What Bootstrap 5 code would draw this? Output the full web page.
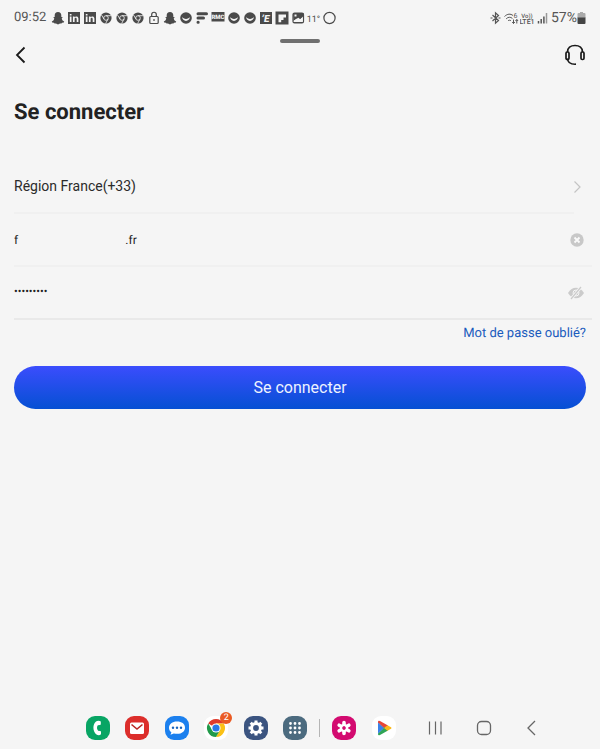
<!DOCTYPE html>
<html lang="fr">
<head>
<meta charset="utf-8">
<meta name="viewport" content="width=device-width, initial-scale=1">
<title>Se connecter</title>
<link href="https://cdn.jsdelivr.net/npm/bootstrap@5.3.0/dist/css/bootstrap.min.css" rel="stylesheet">
<style>
body { background: #f5f5f5; color: #222; font-family: Roboto, "Liberation Sans", sans-serif; text-rendering: geometricPrecision; }
svg { display: block; flex: none; }
svg text { font-family: Roboto, sans-serif; }
.status { height: 36px; padding: 0 14px; font-size: 14px; color: #555; }
.status-icons { color: #4a4a4a; }
.clock { width: 36px; white-space: nowrap; font-size: 13px; color: #555; }
.grip { width: 40px; height: 4px; background: #707070; margin-top: 3px; }
.topbar { height: 24px; padding: 0 14px; }
.plain { background: none; border: 0; padding: 0; color: #1a1a1a; }
.title { font-size: 22px; line-height: 28px; font-weight: 700; margin: 32px 14px 34px; }
.fields { padding: 0 8px 0 14px; }
.line { height: 53px; border-bottom: 2px solid #f0f0f0; padding-right: 8px; }
.line-short { margin-right: 18px; padding-right: 0; }
.line-last { border-color: #e9e9e9; }
.region { font-size: 14px; color: #2b2b2b; }
.region svg { margin-right: -10px; }
.entry, .entry:focus { background: none; border: 0; padding: 0; font-size: 12px; color: #222; box-shadow: none; border-radius: 0; text-rendering: inherit; }
.entry[type=password] { font-size: 11px; }
.forgot { font-size: 13px; line-height: 20px; color: #1a5bbd; margin: 4px 14px 22px; }
.submit { height: 43px; margin: 0 14px; font-size: 16px; color: #eef3ff; border: 0; background: linear-gradient(#3b4dfd, #0550d3); }
.submit:hover { color: #fff; background: linear-gradient(#3b4dfd, #0550d3); }
.dock { padding: 0 59px 9px 86px; }
.apps { width: 221px; }
.recent { width: 64px; }
.navkeys { width: 115px; margin-left: 30px; }
.rule { width: 1px; height: 18px; background: #b5b5b5; margin: 0 12px; }
.count { top: -4px; right: -4px; width: 12px; height: 12px; font-size: 9px; line-height: 12px; background: #ea5a23; color: #fff; }
</style>
<script src="https://cdn.jsdelivr.net/npm/bootstrap@5.3.0/dist/js/bootstrap.bundle.min.js"></script>
</head>
<body>
<svg width="0" height="0" class="position-absolute" aria-hidden="true">
  <defs>
    <symbol id="snap" viewBox="0 0 16 16"><path fill="currentColor" d="M8 2C5.800 2 4.700 3.500 4.700 5.300V7L3.200 7.200 4.300 8.500C4 10 3 11 1.800 11.500L2.200 12.400 4 12.800 4.500 13.600 6 13.400 8 14.400 10 13.400 11.500 13.600 12 12.800 13.800 12.400 14.200 11.500C13 11 12 10 11.700 8.500L12.800 7.200 11.300 7V5.300C11.300 3.500 10.200 2 8 2Z"/></symbol>
    <symbol id="linkedin" viewBox="0 0 16 16"><path fill="currentColor" d="M2 2h12v12H2z"/><path fill="#f5f5f5" d="M3.800 6.500h1.700V12H3.800zM3.800 4h1.700v1.600H3.800zM6.900 6.500h1.600v.8c.8-1.300 3.900-1.300 3.900 1.300V12h-1.700V9c0-1.600-2.100-1.500-2.100 0v3H6.900z"/></symbol>
    <symbol id="chrome-mono" viewBox="0 0 16 16"><circle cx="8" cy="8" r="5.600" fill="currentColor"/><circle cx="8" cy="8" r="2.300" fill="none" stroke="#f5f5f5" stroke-width=".8"/><path stroke="#f5f5f5" stroke-width=".8" fill="none" d="M8 5.700h5M6 9.100 3.400 4.800M10 9.100 7.600 13.500"/></symbol>
    <symbol id="smile" viewBox="0 0 16 16"><circle cx="8" cy="8" r="5.800" fill="currentColor"/><path d="M4 6.800C4.400 12.300 11.600 12.300 12 6.800 10.500 9.600 5.500 9.600 4 6.800Z" fill="#f5f5f5"/></symbol>
  </defs>
</svg>
<div class="d-flex flex-column min-vh-100">
  <header>
    <div class="status d-flex align-items-center justify-content-between">
      <div class="status-icons d-flex align-items-center">
        <span class="clock">09:52</span>
        <svg width="16" height="16"><use href="#snap"/></svg>
        <svg width="16" height="16"><use href="#linkedin"/></svg>
        <svg width="16" height="16"><use href="#linkedin"/></svg>
        <svg width="16" height="16"><use href="#chrome-mono"/></svg>
        <svg width="16" height="16"><use href="#chrome-mono"/></svg>
        <svg width="16" height="16"><use href="#chrome-mono"/></svg>
        <svg width="16" height="16" viewBox="0 0 16 16" fill="none" stroke="currentColor" stroke-width="1.200"><rect x="3.800" y="6.500" width="8.400" height="7" rx="1"/><path d="M5.700 6.500V4.500c0-3 4.600-3 4.600 0v2M8 9v2"/></svg>
        <svg width="16" height="16"><use href="#snap"/></svg>
        <svg width="16" height="16"><use href="#smile"/></svg>
        <svg width="16" height="16" viewBox="0 0 16 16" stroke="currentColor" stroke-width="3" stroke-linecap="round"><path d="M4 3.700h8.500M4 8h5.500M4 12.200h.2"/></svg>
        <svg width="16" height="16" viewBox="0 0 16 16"><path fill="currentColor" d="M1.500 2h13v9.500h-13z"/><text x="8" y="9" font-size="6" font-weight="900" text-anchor="middle" fill="#f5f5f5">RMC</text></svg>
        <svg width="16" height="16"><use href="#smile"/></svg>
        <svg width="16" height="16"><use href="#smile"/></svg>
        <svg width="16" height="16" viewBox="0 0 16 16"><path fill="currentColor" d="M2 2h12v12H2z"/><text x="7.500" y="11.500" font-size="10" font-weight="900" font-style="italic" text-anchor="middle" fill="#f5f5f5">’E</text></svg>
        <svg width="16" height="16" viewBox="0 0 16 16"><path fill="currentColor" d="M1.500 1.500h13v13h-13z"/><path fill="#f5f5f5" d="M4.500 4.500h7.500v3H9.500V10h-2.300v2.300H4.500z"/></svg>
        <svg width="16" height="16" viewBox="0 0 16 16"><rect x="3" y="3" width="10.500" height="10" rx="1.500" fill="none" stroke="currentColor" stroke-width="1.200"/><path fill="currentColor" d="M3 3h10.500v3l-3.200 3.200-2-1.500L3.500 11zM3 12h10v1H3z"/><path fill="#f5f5f5" d="M4.500 4.500h2v2h-2zM4 10.500 7 8.500l2 1.700 3.500-2.800v4.100H4z"/></svg>
        <svg width="16" height="16" viewBox="0 0 16 16"><text x="7.500" y="11.500" font-size="9" text-anchor="middle" fill="currentColor">11°</text></svg>
        <svg width="16" height="16" viewBox="0 0 16 16"><circle cx="7.500" cy="8" r="5.600" fill="none" stroke="currentColor" stroke-width="1.200"/></svg>
      </div>
      <div class="d-flex align-items-center">
        <svg width="14" height="16" viewBox="0 0 14 16" fill="none" stroke="currentColor" stroke-width="1.200"><path d="M4.500 5l6 5.500-3 2.700V2.800l3 2.700L4.500 11M2.500 8h2M10.500 8h2"/></svg>
        <svg width="18" height="16" viewBox="0 0 18 16" fill="none" stroke="currentColor" stroke-width="1"><path d="M2.500 6.500C5.500 3.600 8.500 3.600 11 5.500M4.200 8.800c2-2 4.200-2 6.200-.4M6 10.800c1-.8 2-.8 3 0M11.500 9.500v4M10.200 12l1.300 1.500 1.300-1.500M14.800 13.500v-4M13.500 11l1.300-1.500 1.300 1.500"/><text x="11.500" y="8" font-size="7" fill="currentColor" stroke="none">6</text></svg>
        <svg width="15" height="16" viewBox="0 0 15 16" fill="currentColor"><text x="7" y="7.500" font-size="6" font-weight="500" text-anchor="middle">Vo))</text><text x="7" y="14" font-size="7" font-weight="500" text-anchor="middle">LTE1</text></svg>
        <svg width="16" height="16" viewBox="0 0 16 16" stroke-width="1.500" stroke="currentColor"><path d="M3.500 11v2.500M6.200 9v4.500M8.900 6.500v7"/><path stroke="#999" d="M11.500 3v10.500"/></svg>
        <span>57%</span>
        <svg width="9" height="14" viewBox="0 0 9 14"><path fill="#aaa" d="M3 1h3v1h1.500q1 0 1 1v4h-8V3q0-1 1-1H3z"/><path fill="#444" d="M.5 6.500h8V12q0 1-1 1h-6q-1 0-1-1z"/></svg>
      </div>
    </div>
    <div class="grip rounded-pill mx-auto"></div>
    <div class="topbar d-flex align-items-center justify-content-between">
      <button type="button" class="plain" aria-label="Retour"><svg width="14" height="18" viewBox="0 0 14 18" fill="none" stroke="currentColor" stroke-width="1.800"><path d="M10.500 1.500 3 9l7.500 7.500"/></svg></button>
      <button type="button" class="plain" aria-label="Assistance"><svg width="22" height="22" viewBox="0 0 22 22" fill="none" stroke="currentColor" stroke-width="1.700"><path d="M3.500 8C3.500 4 6.500 1.500 11 1.500S18.500 4 18.500 8M3.500 14.500c.3 4.300 3 6 8.500 5.700"/><rect x="2" y="8" width="3" height="7.500" rx="1.200"/><rect x="17" y="8" width="3" height="7.500" rx="1.200"/></svg></button>
    </div>
  </header>
  <main>
    <form>
      <h1 class="title">Se connecter</h1>
      <div class="fields">
        <div class="line line-short d-flex">
          <button type="button" class="plain region w-100 d-flex align-items-center justify-content-between">Région France(+33)
            <svg width="14" height="14" viewBox="0 0 14 14" fill="none" stroke="#c4c4c4" stroke-width="1.200"><path d="M4.500 1.500 10 7l-5.500 5.500"/></svg></button>
        </div>
        <div class="line d-flex align-items-center">
          <input type="text" class="entry form-control" aria-label="Adresse e-mail" value="f&nbsp;&nbsp;&nbsp;&nbsp;&nbsp;&nbsp;&nbsp;&nbsp;&nbsp;&nbsp;&nbsp;&nbsp;&nbsp;&nbsp;&nbsp;&nbsp;&nbsp;&nbsp;&nbsp;&nbsp;&nbsp;&nbsp;&nbsp;&nbsp;&nbsp;&nbsp;&nbsp;&nbsp;&nbsp;&nbsp;&nbsp;&nbsp;&nbsp;&nbsp;&nbsp;&nbsp;.fr">
          <button type="button" class="plain" aria-label="Effacer"><svg width="14" height="14" viewBox="0 0 14 14"><circle cx="7" cy="7" r="6.700" fill="#c8c8c8"/><path stroke="#fafafa" stroke-width="1.800" d="M4.500 4.500l5 5M9.500 4.500l-5 5"/></svg></button>
        </div>
        <div class="line line-last d-flex align-items-center">
          <input type="password" class="entry form-control" aria-label="Mot de passe" value="motpasse1">
          <button type="button" class="plain" aria-label="Afficher le mot de passe"><svg width="16" height="14" viewBox="0 0 16 14"><path fill="#cbcbcb" d="M0 7C4 0 12 0 16 7 12 14 4 14 0 7Z"/><circle cx="8" cy="7" r="3" fill="none" stroke="#f5f5f5"/><path stroke="#f5f5f5" stroke-width="3" d="M3 13 13 1"/><path stroke="#cbcbcb" stroke-width="1.200" d="M3 13 13 1"/></svg></button>
        </div>
      </div>
      <div class="forgot text-end"><a href="#" class="text-reset text-decoration-none">Mot de passe oublié?</a></div>
      <div class="d-flex"><button type="submit" class="submit btn rounded-pill flex-fill">Se connecter</button></div>
    </form>
  </main>
  <footer class="dock d-flex align-items-center mt-auto">
    <div class="apps d-flex justify-content-between">
      <a href="#" aria-label="Téléphone"><svg width="24" height="24" viewBox="0 0 24 24"><rect width="24" height="24" rx="9" fill="#08a564"/><path fill="#fff" d="M10 5.500C6.500 8 6.500 15.500 10.500 18.500q1.500 1 3.500.5 1-.3 1-1.300v-1.900q0-.8-.9-.9l-2-.2c-1.400-1.700-1.400-3.700-.3-5.400l2.200-.3q.8-.1.800-.9V6q0-.9-.9-1Q11.500 4.500 10 5.500Z"/></svg></a>
      <a href="#" aria-label="E-mail"><svg width="24" height="24" viewBox="0 0 24 24"><rect width="24" height="24" rx="9" fill="#dc2e2b"/><rect x="5" y="6.500" width="14" height="11.500" rx="1.500" fill="#fff"/><path fill="none" stroke="#b92724" stroke-width="1.600" d="M6.500 8.500 12 13l5.500-4.500"/></svg></a>
      <a href="#" aria-label="Messages"><svg width="24" height="24" viewBox="0 0 24 24"><rect width="24" height="24" rx="9" fill="#1c80ee"/><path fill="#fff" d="M12 5.500c-4.700 0-8 2.600-8 6.200 0 2 1 3.500 2.400 4.500L5.500 18.700l3.300-1.200c7 1.500 11.200-1.800 11.200-5.800S16.700 5.500 12 5.500Z"/><g fill="#1764be"><circle cx="8" cy="11.700" r="1.200"/><circle cx="12" cy="11.700" r="1.200"/><circle cx="16" cy="11.700" r="1.200"/></g></svg></a>
      <a href="#" aria-label="Chrome" class="position-relative"><svg width="24" height="24" viewBox="0 0 24 24"><rect width="24" height="24" rx="9" fill="#fff"/><path fill="#df3a2c" d="M12 12 4.200 7.500A9 9 0 0 1 19.800 7.500L12 7.500Z"/><path fill="#fbc116" d="M12 12V7.500h7.800A9 9 0 0 1 12 21l4-7Z"/><path fill="#219a4a" d="m12 12 4 2.300L12 21A9 9 0 0 1 4.200 7.500L8.200 14Z"/><circle cx="12" cy="12" r="4.600" fill="#fff"/><circle cx="12" cy="12" r="3.600" fill="#2878e8"/></svg><span class="count position-absolute rounded-circle text-center">2</span></a>
      <a href="#" aria-label="Paramètres"><svg width="24" height="24" viewBox="0 0 24 24"><rect width="24" height="24" rx="9" fill="#3b5480"/><circle cx="12" cy="12" r="4.400" fill="none" stroke="#fff" stroke-width="3"/><path stroke="#fff" stroke-width="3" d="M12 4.500v2.500M12 17v2.500M4.500 12H7M17 12h2.500M6.700 6.700l1.800 1.800M15.500 15.500l1.800 1.800M6.700 17.300l1.800-1.800M15.500 8.500l1.800-1.800"/></svg></a>
      <a href="#" aria-label="Applications"><svg width="24" height="24" viewBox="0 0 24 24"><rect width="24" height="24" rx="9" fill="#4c6b7f"/><path stroke="#fff" stroke-width="2.800" stroke-linecap="round" d="M7.500 7.500h0M12 7.500h0M16.500 7.500h0M7.500 12h0M12 12h0M16.500 12h0M7.500 16.500h0M12 16.500h0M16.500 16.500h0"/></svg></a>
    </div>
    <div class="rule"></div>
    <div class="recent d-flex justify-content-between">
      <a href="#" aria-label="Galerie"><svg width="24" height="24" viewBox="0 0 24 24"><rect width="24" height="24" rx="9" fill="#d30b70"/><path stroke="#fff" stroke-width="3.600" stroke-linecap="round" d="M12 6.500v2M12 15.500v2M7.200 9.200l1.800 1M15 13.800l1.800 1M7.200 14.800l1.800-1M15 10.200l1.800-1"/><circle cx="12" cy="12" r="3" fill="none" stroke="#fff" stroke-width="2"/></svg></a>
      <a href="#" aria-label="Play Store"><svg width="24" height="24" viewBox="0 0 24 24"><rect width="24" height="24" rx="9" fill="#fff"/><path fill="#e84636" d="M6 6q0-2 2-1l8 4.500L12.500 13 6 6.500z"/><path fill="#30a556" d="M6 18q0 2 2 1l8-4.500L12.500 11 6 17.500z"/><path fill="#3b82e8" d="M6 6.500v11l6-5.500z"/><path fill="#fbb91a" d="m15.500 9.200 3.500 2q1.200.8 0 1.600l-3.500 2-3.500-2.800z"/></svg></a>
    </div>
    <div class="navkeys d-flex justify-content-between align-items-center">
      <button type="button" class="plain" aria-label="Récents"><svg width="18" height="18" viewBox="0 0 18 18" stroke="#666" stroke-width="1.200"><path d="M3.500 2.500v13M9.500 2.500v13M15 2.500v13"/></svg></button>
      <button type="button" class="plain" aria-label="Accueil"><svg width="18" height="18" viewBox="0 0 18 18"><rect x="2.500" y="2.500" width="13" height="13" rx="4" fill="none" stroke="#666" stroke-width="1.300"/></svg></button>
      <button type="button" class="plain" aria-label="Retour système"><svg width="18" height="18" viewBox="0 0 18 18" fill="none" stroke="#666" stroke-width="1.300"><path d="M12 2 5 9l7 7"/></svg></button>
    </div>
  </footer>
</div>
</body>
</html>
